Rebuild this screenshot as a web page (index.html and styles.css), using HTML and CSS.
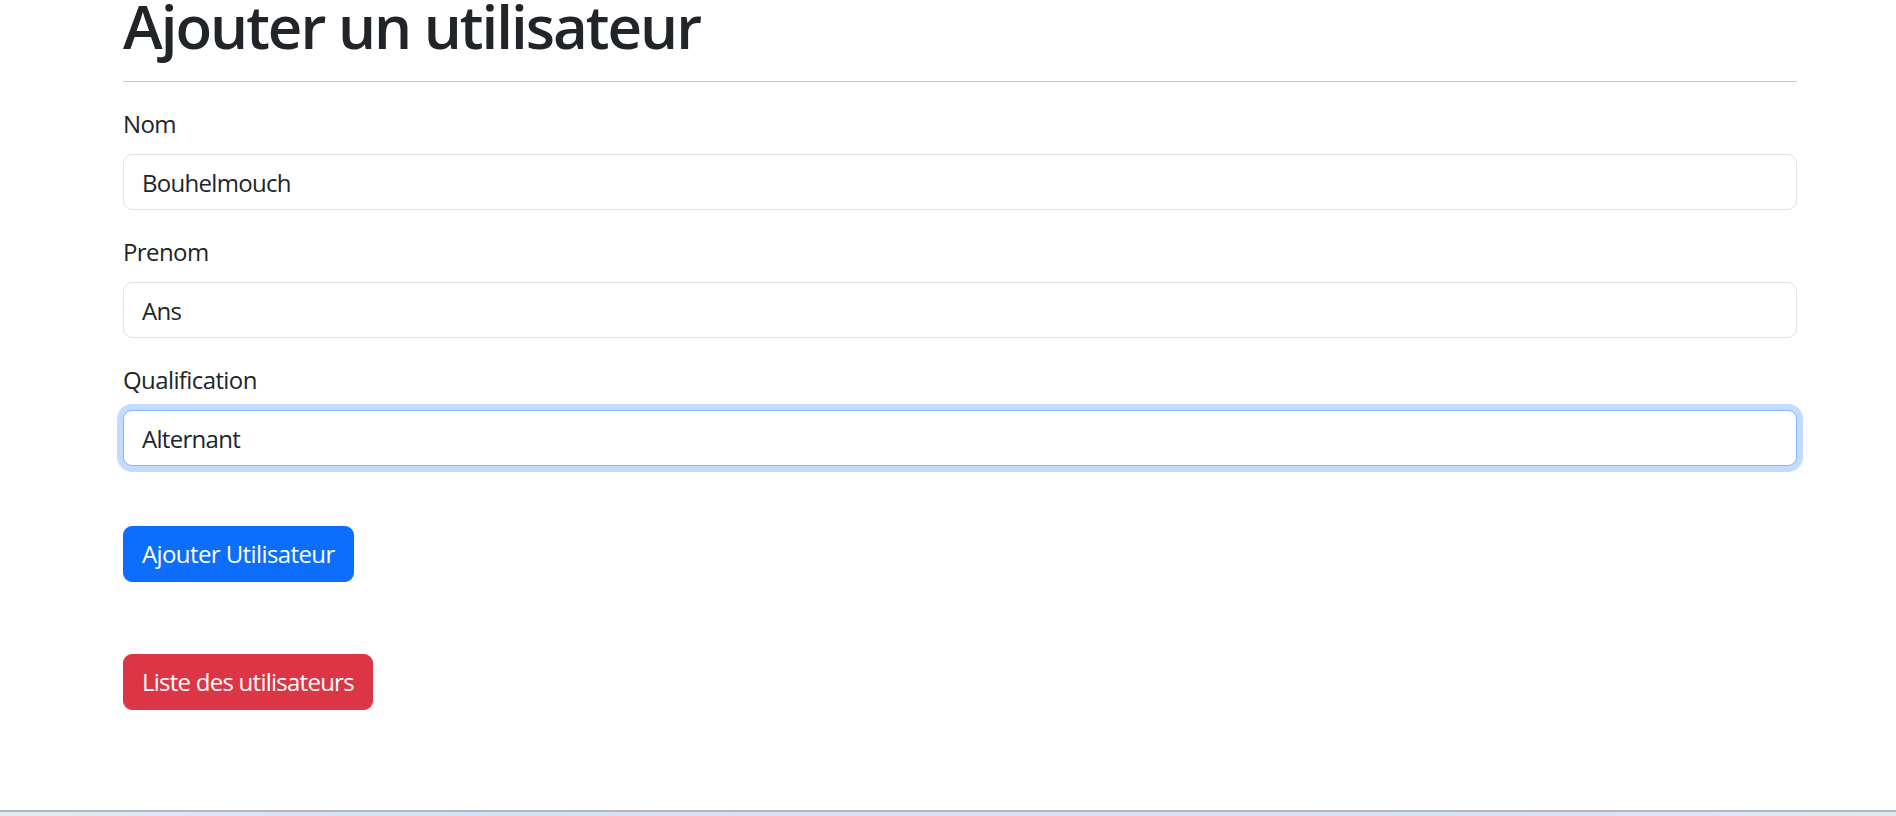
FILE: index.html
```html
<!DOCTYPE html>
<html lang="fr">
<head>
<meta charset="utf-8">
<title>Ajouter un utilisateur</title>
<link rel="stylesheet" href="styles.css">
</head>
<body>
<main class="container">
  <h1 class="title">Ajouter un utilisateur</h1>
  <hr class="divider">
  <form class="user-form">
    <div class="field">
      <label class="field-label" for="nom">Nom</label>
      <input class="field-input" id="nom" type="text" value="Bouhelmouch">
    </div>
    <div class="field">
      <label class="field-label" for="prenom">Prenom</label>
      <input class="field-input" id="prenom" type="text" value="Ans">
    </div>
    <div class="field">
      <label class="field-label" for="qualification">Qualification</label>
      <input class="field-input is-focused" id="qualification" type="text" value="Alternant">
    </div>
    <div class="actions">
      <button class="btn btn-primary" type="button">Ajouter Utilisateur</button>
    </div>
  </form>
  <div class="actions actions-list">
    <a class="btn btn-danger" href="#">Liste des utilisateurs</a>
  </div>
</main>
<div class="taskbar-edge"></div>
</body>
</html>
```
FILE: styles.css
```css
* { box-sizing: border-box; }

html, body { height: 100%; }

body {
  margin: 0;
  min-height: 816px;
  display: flex;
  flex-direction: column;
  font-family: "Open Sans", "Noto Sans", sans-serif;
  font-size: 24px;
  color: #212529;
  background: #fff;
  overflow: hidden;
}

.container {
  padding: 0 99px 0 123px;
}

.title {
  margin: 0;
  padding-top: 1px;
  font-size: 60px;
  line-height: 50px;
  font-weight: 600;
  letter-spacing: -2px;
}

.divider {
  margin: 30px 0 24px;
  border: 0;
  border-top: 1px solid #c8c9ca;
  height: 0;
}

.user-form { margin: 0; }

.field { margin-bottom: 24px; }

.field-label {
  display: block;
  margin-bottom: 12px;
  line-height: 36px;
  letter-spacing: -0.6px;
}

.field-input {
  display: block;
  width: 100%;
  height: 56px;
  padding: 0 18px;
  font: inherit;
  letter-spacing: -0.7px;
  color: #212529;
  background: #fff;
  border: 1px solid #dee2e6;
  border-radius: 9px;
  outline: none;
}

.field-input.is-focused {
  border-color: #86b7fe;
  box-shadow: 0 0 0 6px rgba(13, 110, 253, 0.25);
}

.actions { padding-top: 36px; }

.actions-list { padding-top: 72px; }

.btn {
  display: inline-block;
  padding: 9px 18px;
  font: inherit;
  line-height: 36px;
  letter-spacing: -0.6px;
  color: #fff;
  text-decoration: none;
  border: 1px solid transparent;
  border-radius: 9px;
  cursor: pointer;
}

.btn-primary { background: #0d6efd; border-color: #0d6efd; }

.btn-danger { background: #dc3545; border-color: #dc3545; letter-spacing: -0.75px; }

.taskbar-edge {
  margin-top: auto;
  height: 6px;
  border-top: 2px solid #b1b7c2;
  background: linear-gradient(90deg, #e4ebf3, #d3e2f6 25%, #dde1ef 50%, #d6e3f5 75%, #e2e9f2);
}
```
